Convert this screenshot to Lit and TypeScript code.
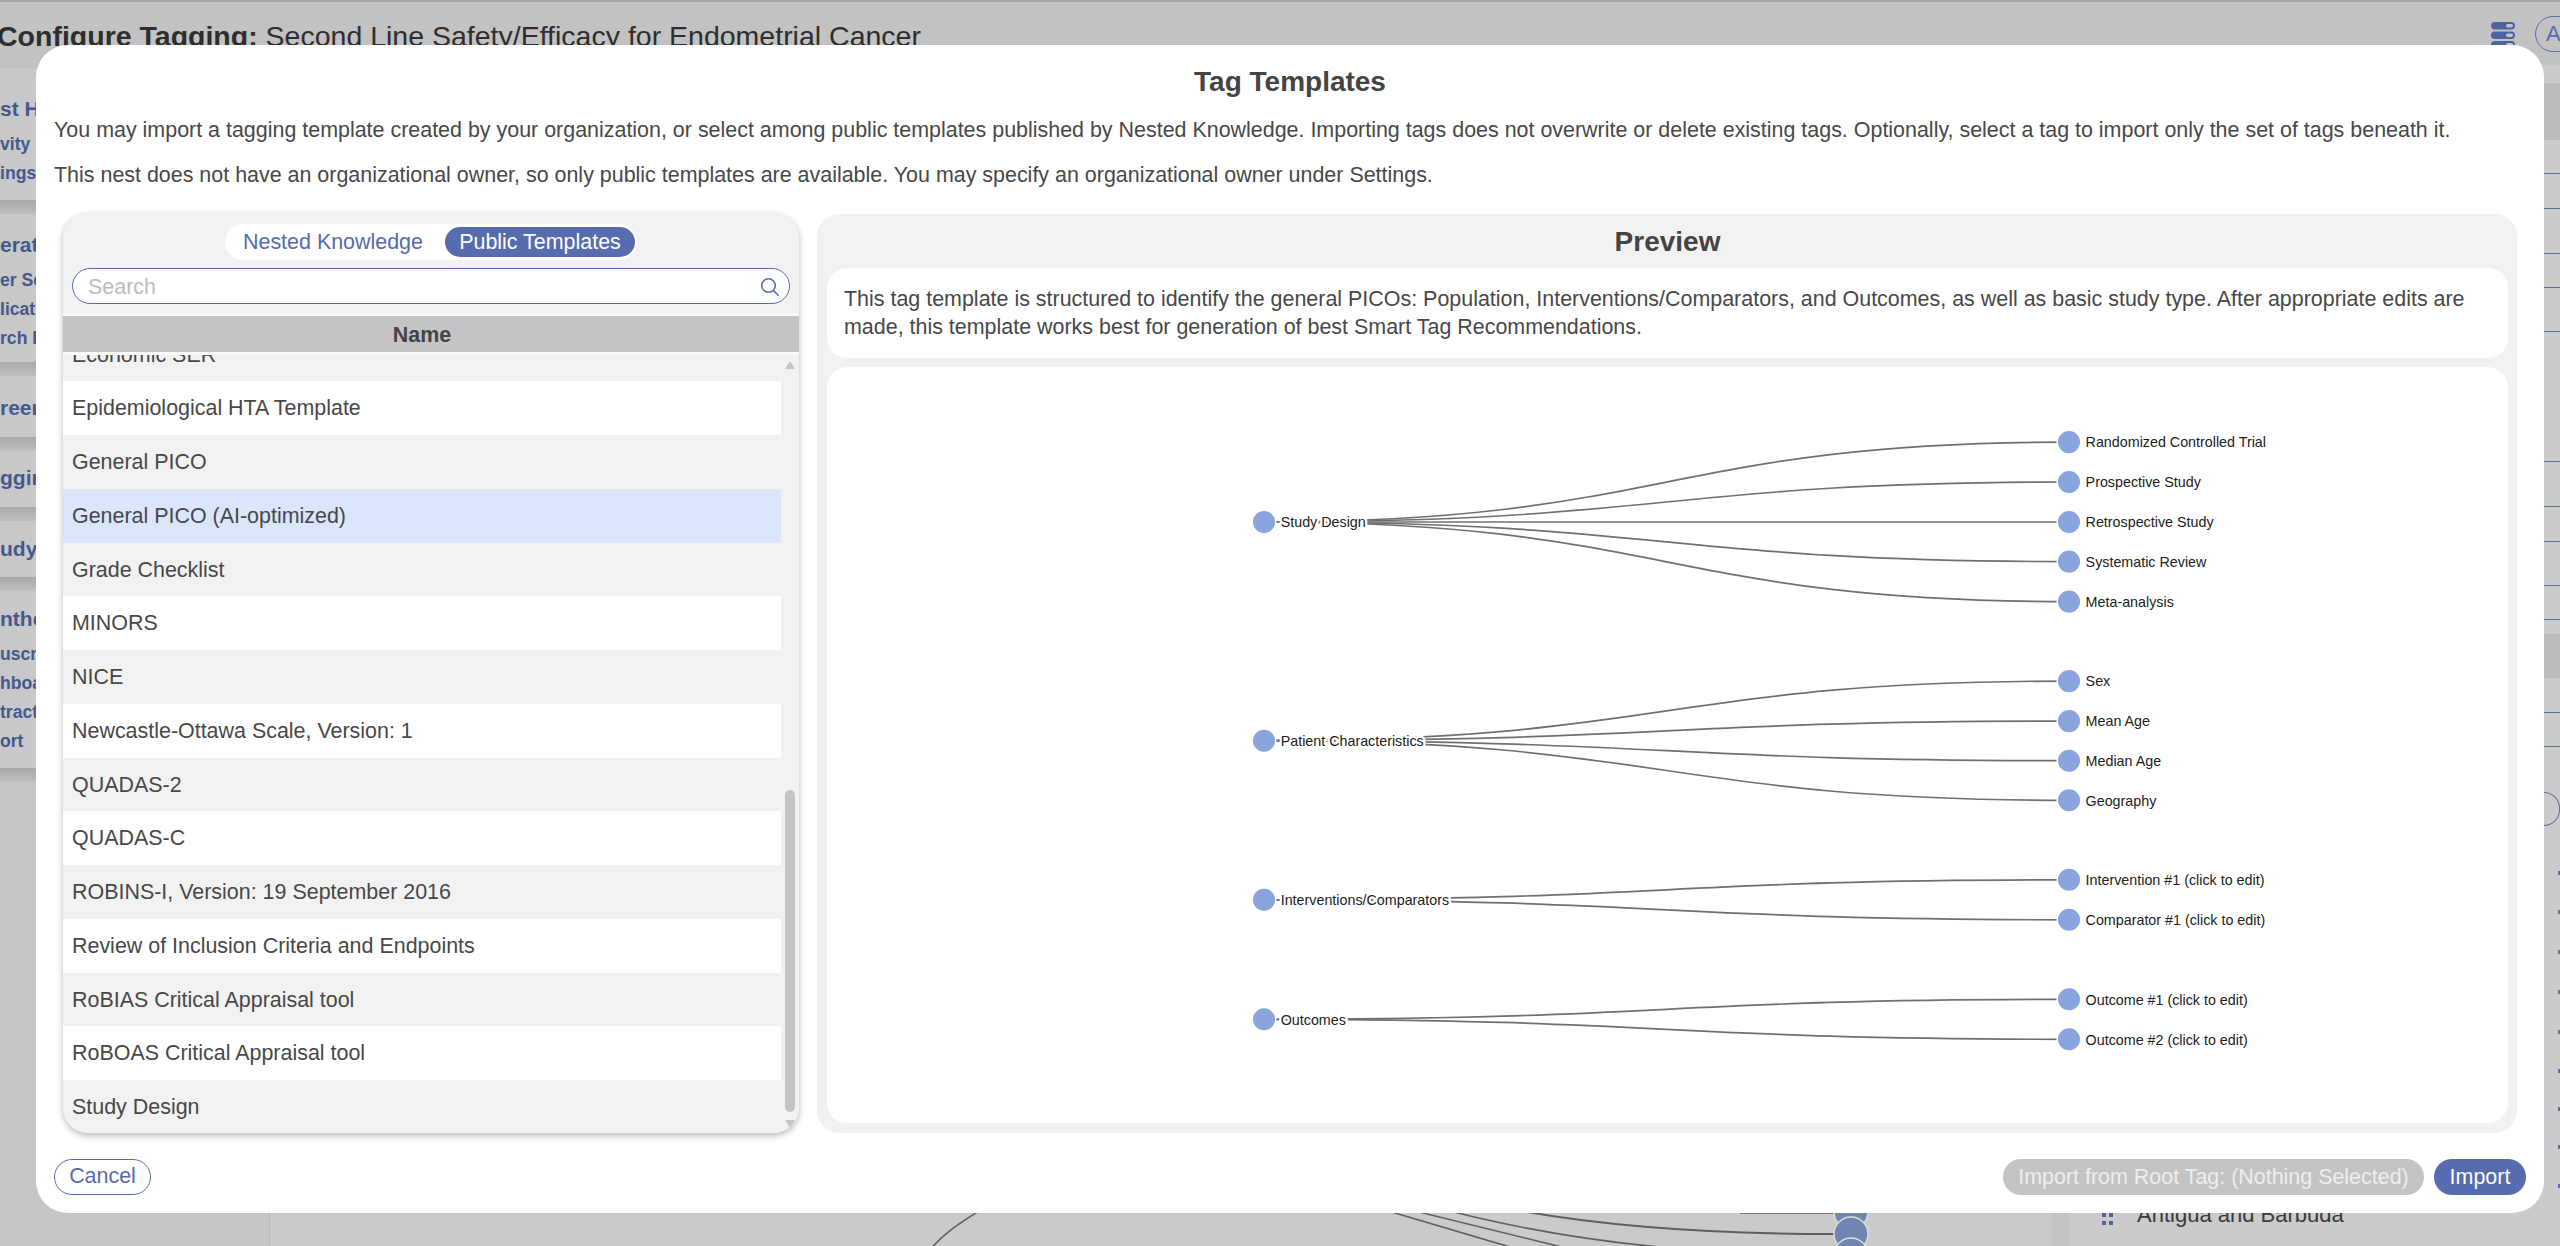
import { LitElement, html, css, svg } from "lit";
import { customElement } from "lit/decorators.js";

const ROWS = [
  "Economic SER",
  "Epidemiological HTA Template",
  "General PICO",
  "General PICO (AI-optimized)",
  "Grade Checklist",
  "MINORS",
  "NICE",
  "Newcastle-Ottawa Scale, Version: 1",
  "QUADAS-2",
  "QUADAS-C",
  "ROBINS-I, Version: 19 September 2016",
  "Review of Inclusion Criteria and Endpoints",
  "RoBIAS Critical Appraisal tool",
  "RoBOAS Critical Appraisal tool",
  "Study Design",
];

const TREE = [
  { name: "Study Design", y: 522, kids: [["Randomized Controlled Trial", 442.1], ["Prospective Study", 482], ["Retrospective Study", 522], ["Systematic Review", 561.6], ["Meta-analysis", 601.6]] },
  { name: "Patient Characteristics", y: 740.7, kids: [["Sex", 681.1], ["Mean Age", 721.1], ["Median Age", 760.7], ["Geography", 800.3]] },
  { name: "Interventions/Comparators", y: 899.8, kids: [["Intervention #1 (click to edit)", 879.8], ["Comparator #1 (click to edit)", 919.8]] },
  { name: "Outcomes", y: 1019.3, kids: [["Outcome #1 (click to edit)", 999.3], ["Outcome #2 (click to edit)", 1039.3]] },
] as { name: string; y: number; kids: [string, number][] }[];

const SIDE = [
  { h: 131, pad: 26, title: "st Home", subs: ["vity", "ings"] },
  { h: 148, pad: 17, title: "eration", subs: ["er Search", "lication", "rch Builder"] },
  { h: 61, pad: 18, title: "reening", subs: [] },
  { h: 56, pad: 13, title: "gging", subs: [] },
  { h: 56, pad: 14, title: "udy", subs: [] },
  { h: 177, pad: 14, title: "nthesis", subs: ["uscript", "hboard", "traction", "ort"] },
];

const STRIP: [number, string][] = [
  [18, ""], [57, "band"], [34, "ln"], [35, "ln"], [45, "ln"], [34, "ln"], [44, "ln"], [130, "ln"], [45, "ln"], [35, "ln"], [44, "ln"], [34, "ln"],
  [14, ""], [44, "band"], [35, "ln"], [34, "ln"], [45, ""], [34, "pill"], [45, ""],
  [39, "dot"], [40, "dot"], [40, "dot"], [40, "dot"], [39, "dot"], [38, "dot"], [38, "dot"], [39, "dot"], [40, "dot"],
];

const X0 = 1264;
const X1 = 2069;
const link = (y0: number, y1: number) => {
  const m = (X0 + X1) / 2;
  return `M${X0} ${y0}C${m} ${y0} ${m} ${y1} ${X1} ${y1}`;
};

@customElement("app-root")
export class AppRoot extends LitElement {
  static styles = css`
    :host {
      display: block;
      position: relative;
      width: 2560px;
      height: 1246px;
      overflow: hidden;
      background: #cacaca;
      font-family: "Liberation Sans", Arial, sans-serif;
      color: #484848;
    }
    * { box-sizing: border-box; }

    /* page behind the dialog */
    .page { display: flex; flex-direction: column; height: 100%; }
    .top {
      flex: none;
      height: 65px;
      display: flex;
      align-items: flex-start;
      background: #c2c2c2;
      border-top: 2px solid #a4a4a4;
      color: #2e2e2e;
    }
    .crumb { margin: 17px 0 0 -3px; font-size: 28.5px; line-height: 34px; white-space: nowrap; }
    .bars { margin: 20px 20px 0 auto; flex: none; display: block; }
    .avatar {
      flex: none;
      width: 60px;
      height: 36px;
      margin: 14px -35px 0 0;
      border: 1.5px solid #566cae;
      border-radius: 18px;
      color: #566cae;
      font-size: 22px;
      line-height: 33px;
      padding-left: 10px;
    }
    .body { flex: 1; display: flex; min-height: 0; }
    .side {
      flex: none;
      width: 270px;
      border-right: 1px solid #b8b8b8;
      padding-top: 4px;
      background: linear-gradient(#bcbcbc, #c6c6c6 4px);
      display: flex;
      flex-direction: column;
    }
    .card {
      background: #c8c8c8;
      color: #44598f;
      font-weight: bold;
      white-space: nowrap;
      overflow: hidden;
    }
    .card .t { font-size: 21px; line-height: 28px; margin-bottom: 7px; }
    .card .s { font-size: 17.6px; line-height: 29px; }
    .gap { flex: none; height: 14px; background: linear-gradient(#a9a9a9, #bfbfbf); }
    .center { flex: 1; position: relative; min-width: 0; }
    .center svg { position: absolute; left: 0; top: 0; }
    .right {
      flex: none;
      width: 508px;
      display: flex;
      border-left: 18px solid #c4c4c4;
      background: #cbcbcb;
    }
    .country {
      flex: 1;
      display: flex;
      align-items: flex-end;
      gap: 24px;
      padding: 0 0 17px 32px;
      font-size: 22px;
      line-height: 28px;
      color: #3a3a3a;
      white-space: nowrap;
    }
    .grip {
      display: grid;
      grid-template-columns: 4px 4px;
      gap: 4px 3px;
      margin-bottom: 4px;
    }
    .grip i { display: block; width: 4px; height: 4px; background: #4d64a0; }
    .strip { flex: none; width: 16px; display: flex; flex-direction: column; }
    .strip .ln { border-bottom: 1px solid #5d7099; }
    .strip .band { background: #bbbbbb; }
    .strip .pill {
      border: 1px solid #5d7099;
      border-left: 0;
      border-radius: 0 17px 17px 0;
    }
    .strip .dot { display: flex; justify-content: flex-end; }
    .strip .dot::after { content: ""; width: 2px; height: 4px; background: #5d7099; }

    /* dialog */
    .modal {
      position: absolute;
      left: 36px;
      top: 45px;
      width: 2508px;
      height: 1168px;
      padding: 0 18px;
      background: #fff;
      border-radius: 32px;
      display: flex;
      flex-direction: column;
    }
    h1 {
      margin: 0;
      height: 72px;
      font-size: 28px;
      line-height: 74px;
      font-weight: bold;
      text-align: center;
      color: #444;
      flex: none;
    }
    p.info { margin: 0; font-size: 21.45px; line-height: 26px; flex: none; white-space: nowrap; }
    p.info + p.info { margin-top: 19px; }
    .cols { flex: 1; min-height: 0; display: flex; gap: 18px; margin: 25px 9px 0; }
    .left {
      flex: none;
      width: 736px;
      display: flex;
      flex-direction: column;
      background: #f2f2f2;
      border-radius: 25px;
      box-shadow: 0 3px 6px rgba(0, 0, 0, 0.24), 0 0 5px rgba(0, 0, 0, 0.05);
      padding-top: 11px;
      font-size: 21.45px;
    }
    .toggle {
      align-self: center;
      flex: none;
      width: 412px;
      height: 36px;
      padding: 3px 2px 3px 18px;
      background: #fff;
      border-radius: 18px;
      display: flex;
      align-items: center;
      justify-content: space-between;
      color: #566cae;
    }
    .toggle .on {
      width: 190px;
      height: 30px;
      line-height: 30px;
      text-align: center;
      color: #fff;
      background: #566cae;
      border-radius: 15px;
    }
    .search {
      flex: none;
      margin: 8px 9px 0;
      height: 36px;
      display: flex;
      align-items: center;
      justify-content: space-between;
      padding: 2px 9px 0 15px;
      background: #fff;
      border: 1.5px solid #566cae;
      border-radius: 18px;
      color: #bcbcbc;
    }
    .head {
      flex: none;
      margin-top: 9px;
      height: 42px;
      line-height: 38px;
      padding-right: 18px;
      border-top: 3px solid #fafafa;
      border-bottom: 3px solid #fafafa;
      background: #c4c4c4;
      text-align: center;
      font-weight: bold;
      color: #444;
    }
    .listwrap {
      flex: 1;
      min-height: 0;
      display: flex;
      overflow: hidden;
      border-radius: 0 0 25px 25px;
    }
    .list { flex: 1; min-width: 0; overflow: hidden; }
    .row {
      height: 53.75px;
      line-height: 54.5px;
      padding-left: 9px;
      background: #fff;
      white-space: nowrap;
    }
    .row:nth-child(odd) { background: #f2f2f2; }
    .row:first-child { margin-top: -27.5px; }
    .row.sel { background: #dbe6fd; }
    .sb {
      flex: none;
      width: 18px;
      display: flex;
      flex-direction: column;
      align-items: center;
      padding: 6px 0 5px;
    }
    .arrow {
      flex: none;
      width: 0;
      height: 0;
      border-left: 5px solid transparent;
      border-right: 5px solid transparent;
    }
    .arrow.up { border-bottom: 8px solid #c4c4c4; }
    .arrow.down { border-top: 8px solid #c4c4c4; margin-top: 8px; }
    .thumb {
      flex: none;
      width: 10px;
      height: 322px;
      margin-top: auto;
      background: #c4c4c4;
      border-radius: 5px;
    }
    .preview {
      flex: 1;
      min-width: 0;
      margin-top: 1px;
      padding: 0 9px 10px 10px;
      display: flex;
      flex-direction: column;
      background: #f2f2f2;
      border-radius: 22px;
    }
    h2 {
      margin: 0;
      flex: none;
      height: 54px;
      font-size: 28px;
      line-height: 55px;
      font-weight: bold;
      text-align: center;
      color: #444;
    }
    .desc {
      flex: none;
      height: 90px;
      padding: 18px 17px;
      background: #fff;
      border-radius: 20px;
      font-size: 21.45px;
      line-height: 27.5px;
    }
    .graph {
      flex: 1;
      min-height: 0;
      margin-top: 9px;
      background: #fff;
      border-radius: 20px;
      overflow: hidden;
    }
    .graph svg { display: block; width: 100%; height: 100%; }
    .graph path { fill: none; stroke: #707070; stroke-width: 1.7; }
    .graph circle { fill: #8aa4dd; stroke: #fff; stroke-width: 1.5; }
    .graph text {
      font-family: "Liberation Sans", Arial, sans-serif;
      font-size: 14.3px;
      fill: #222;
      stroke: #fff;
      stroke-width: 4.6px;
      paint-order: stroke;
    }
    .foot {
      flex: none;
      margin: 26px 0 18px;
      height: 36px;
      display: flex;
      align-items: center;
      gap: 10px;
      font-size: 21.45px;
    }
    .btn {
      height: 36px;
      line-height: 36px;
      border-radius: 18px;
      text-align: center;
      white-space: nowrap;
    }
    .cancel {
      width: 97px;
      line-height: 33px;
      border: 1.5px solid #566cae;
      color: #566cae;
      margin-right: auto;
    }
    .off { width: 421px; background: #c4c4c4; color: #eeeeee; }
    .go { width: 92px; background: #566cae; color: #fff; }
  `;

  private tree() {
    return TREE.map(
      (g) => svg`
        ${g.kids.map(([, y]) => svg`<path d=${link(g.y, y)}></path>`)}
        <circle cx=${X0} cy=${g.y} r="11.8"></circle>
        <text x="1280.7" y=${g.y} dy="5.2">${g.name}</text>
        ${g.kids.map(
          ([n, y]) => svg`
            <circle cx=${X1} cy=${y} r="11.8"></circle>
            <text x="2085.6" y=${y} dy="5.2">${n}</text>`
        )}`
    );
  }

  render() {
    return html`
      <div class="page">
        <div class="top">
          <div class="crumb"><b>Configure Tagging:</b> Second Line Safety/Efficacy for Endometrial Cancer</div>
          <svg class="bars" width="24" height="30" viewBox="0 0 24 30">
            ${[0, 9.5, 19].map(
              (y) => svg`
                <rect x="0" y=${y} width="24" height="7.5" rx="3.7" fill="#4d64a0"></rect>
                <rect x="15" y=${y + 2} width="7" height="3.5" rx="1.7" fill="#c2c2c2"></rect>`
            )}
          </svg>
          <div class="avatar">A</div>
        </div>
        <div class="body">
          <div class="side">
            ${SIDE.map(
              (c) => html`
                <div class="card" style="height:${c.h}px;padding-top:${c.pad}px">
                  <div class="t">${c.title}</div>
                  ${c.subs.map((s) => html`<div class="s">${s}</div>`)}
                </div>
                <div class="gap"></div>`
            )}
          </div>
          <div class="center">
            <svg width="1782" height="1181" viewBox="270 65 1782 1181" fill="none" stroke="#5f5f5f" stroke-width="1.6">
              <path d="M994 1200C975 1216 950 1225 928 1252"></path>
              <path d="M1351 1200L1527 1252"></path>
              <path d="M1370 1200L1578 1251"></path>
              <path d="M1427 1205C1500 1225 1580 1240 1670 1248"></path>
              <path d="M1490 1205C1600 1228 1720 1234 1834 1234" stroke-width="2"></path>
              <path d="M1740 1213L1834 1213"></path>
              ${[1212, 1234, 1255].map(
                (y) => svg`<circle cx="1851" cy=${y} r="17" fill="#7085b0" stroke="#dcdcdc" stroke-width="1.5"></circle>`
              )}
            </svg>
          </div>
          <div class="right">
            <div class="country">
              <div class="grip"><i></i><i></i><i></i><i></i></div>
              <span>Antigua and Barbuda</span>
            </div>
            <div class="strip">
              ${STRIP.map(([h, k]) => html`<div class=${k} style="height:${h}px;flex:none"></div>`)}
            </div>
          </div>
        </div>
      </div>

      <div class="modal">
        <h1>Tag Templates</h1>
        <p class="info">You may import a tagging template created by your organization, or select among public templates published by Nested Knowledge. Importing tags does not overwrite or delete existing tags. Optionally, select a tag to import only the set of tags beneath it.</p>
        <p class="info">This nest does not have an organizational owner, so only public templates are available. You may specify an organizational owner under Settings.</p>
        <div class="cols">
          <div class="left">
            <div class="toggle">
              <span>Nested Knowledge</span>
              <span class="on">Public Templates</span>
            </div>
            <div class="search">
              <span>Search</span>
              <svg width="20" height="20" viewBox="0 0 20 20" fill="none" stroke="#566cae" stroke-width="1.6">
                <circle cx="8.5" cy="8.5" r="6.8"></circle>
                <path d="M13.4 13.4L18.6 18.8"></path>
              </svg>
            </div>
            <div class="head">Name</div>
            <div class="listwrap">
              <div class="list">
                ${ROWS.map(
                  (r) => html`<div class="row ${r === "General PICO (AI-optimized)" ? "sel" : ""}">${r}</div>`
                )}
              </div>
              <div class="sb">
                <div class="arrow up"></div>
                <div class="thumb"></div>
                <div class="arrow down"></div>
              </div>
            </div>
          </div>
          <div class="preview">
            <h2>Preview</h2>
            <div class="desc">This tag template is structured to identify the general PICOs: Population, Interventions/Comparators, and Outcomes, as well as basic study type. After appropriate edits are made, this template works best for generation of best Smart Tag Recommendations.</div>
            <div class="graph">
              <svg viewBox="827 367 1681 756">${this.tree()}</svg>
            </div>
          </div>
        </div>
        <div class="foot">
          <div class="btn cancel">Cancel</div>
          <div class="btn off">Import from Root Tag: (Nothing Selected)</div>
          <div class="btn go">Import</div>
        </div>
      </div>
    `;
  }
}
